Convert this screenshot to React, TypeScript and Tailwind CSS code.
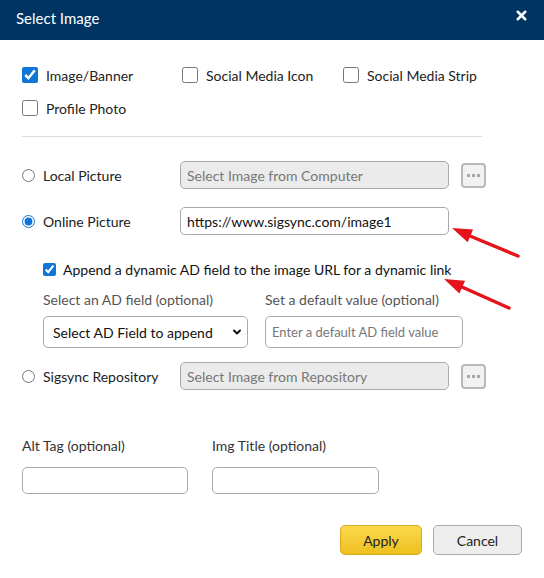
import { useState } from "react";
import { ChevronDown, X } from "lucide-react";

const IMAGE_TYPES = ["Image/Banner", "Social Media Icon", "Social Media Strip", "Profile Photo"];

const DotsButton = () => (
  <button className="ml-[12px] w-[25px] h-[25px] border-2 border-[#b9b9b9] rounded-[4px] bg-[#f1f1f1] flex items-center justify-center gap-[2px]">
    <span className="w-[3px] h-[3px] bg-[#a8a8a8]" />
    <span className="w-[3px] h-[3px] bg-[#a8a8a8]" />
    <span className="w-[3px] h-[3px] bg-[#a8a8a8]" />
  </button>
);

const SourceRow = ({
  label,
  value,
  placeholder,
  checked,
  onPick,
  withDots,
}: {
  label: string;
  value?: string;
  placeholder: string;
  checked: boolean;
  onPick: () => void;
  withDots: boolean;
}) => (
  <div className="flex items-center h-[28px]">
    <label className="w-[158px] flex items-center gap-[8px] text-[14px] text-[#222]">
      <input type="radio" checked={checked} onChange={onPick} className="m-0 w-[13px] h-[13px] accent-[#0f76d8]" />
      {label}
    </label>
    <input
      type="text"
      disabled={withDots}
      defaultValue={value}
      placeholder={placeholder}
      className={
        "w-[269px] h-[28px] px-[6px] border border-[#a9a9a9] rounded-[5px] text-[14px] outline-none placeholder:text-[#777] " +
        (withDots ? "bg-[#ebebeb]" : "bg-white text-[#111]")
      }
    />
    {withDots && <DotsButton />}
  </div>
);

export default function App() {
  const [types, setTypes] = useState<string[]>(["Image/Banner"]);
  const [source, setSource] = useState("online");
  const [appendField, setAppendField] = useState(true);

  const toggleType = (t: string) =>
    setTypes((prev) => (prev.includes(t) ? prev.filter((p) => p !== t) : [...prev, t]));

  return (
    <div className="relative w-[544px] h-[578px] bg-white font-['Lato','Liberation_Sans',sans-serif]">
      <div className="h-[40px] bg-[#003463] flex items-center justify-between pl-[16px] pr-[15px]">
        <span className="text-white text-[15px] -mt-[3px]">Select Image</span>
        <X size={15} strokeWidth={4} className="text-white -mt-[9px]" />
      </div>

      <div className="pl-[22px] pr-[22px]">
        <div className="grid grid-cols-[160px_161px_160px] gap-y-[17px] pt-[27px]">
          {IMAGE_TYPES.map((t) => (
            <label key={t} className="flex items-center gap-[8px] h-[16px] text-[14px] text-[#222]">
              <input
                type="checkbox"
                checked={types.includes(t)}
                onChange={() => toggleType(t)}
                className="m-0 w-[16px] h-[16px] accent-[#0f76d8]"
              />
              {t}
            </label>
          ))}
        </div>

        <div className="mt-[20px] h-px w-[460px] bg-[#dcdcdc]" />

        <div className="mt-[24px]">
          <SourceRow
            label="Local Picture"
            placeholder="Select Image from Computer"
            checked={source === "local"}
            onPick={() => setSource("local")}
            withDots
          />
        </div>
        <div className="mt-[18px]">
          <SourceRow
            label="Online Picture"
            value="https://www.sigsync.com/image1"
            placeholder=""
            checked={source === "online"}
            onPick={() => setSource("online")}
            withDots={false}
          />
        </div>

        <div className="pl-[21px]">
          <label className="mt-[26px] flex items-center gap-[7px] h-[16px] text-[14px] text-[#111]">
            <input
              type="checkbox"
              checked={appendField}
              onChange={() => setAppendField(!appendField)}
              className="m-0 w-[13px] h-[13px] accent-[#0f76d8]"
            />
            Append a dynamic AD field to the image URL for a dynamic link
          </label>

          <div className="mt-[14px] flex gap-[17px]">
            <div className="w-[205px]">
              <div className="text-[14px] leading-[17px] text-[#555]">Select an AD field (optional)</div>
              <div className="relative mt-[8px]">
                <select className="appearance-none w-[205px] h-[32px] pl-[9px] border border-[#a9a9a9] rounded-[5px] bg-white text-[14px] text-[#111] outline-none">
                  <option>Select AD Field to append</option>
                </select>
                <ChevronDown size={12} strokeWidth={4} className="absolute right-[5px] top-[10px] text-[#111] pointer-events-none" />
              </div>
            </div>
            <div className="w-[198px]">
              <div className="text-[14px] leading-[17px] text-[#555]">Set a default value (optional)</div>
              <input
                type="text"
                placeholder="Enter a default AD field value"
                className="mt-[8px] w-[198px] h-[32px] px-[6px] border border-[#a9a9a9] rounded-[5px] text-[13px] outline-none placeholder:text-[#777]"
              />
            </div>
          </div>
        </div>

        <div className="mt-[14px]">
          <SourceRow
            label="Sigsync Repository"
            placeholder="Select Image from Repository"
            checked={source === "repo"}
            onPick={() => setSource("repo")}
            withDots
          />
        </div>

        <div className="mt-[47px] flex gap-[24px]">
          <div className="w-[166px]">
            <div className="text-[14px] leading-[17px] text-[#333]">Alt Tag (optional)</div>
            <input type="text" className="mt-[13px] w-[166px] h-[27px] px-[6px] border border-[#a9a9a9] rounded-[5px] outline-none" />
          </div>
          <div className="w-[167px]">
            <div className="text-[14px] leading-[17px] text-[#333]">Img Title (optional)</div>
            <input type="text" className="mt-[13px] w-[167px] h-[27px] px-[6px] border border-[#a9a9a9] rounded-[5px] outline-none" />
          </div>
        </div>

        <div className="mt-[31px] flex justify-end gap-[11px]">
          <button className="w-[82px] h-[30px] rounded-[5px] border border-[#d6ab22] bg-gradient-to-b from-[#fbd84c] to-[#eec01a] text-[14px] text-[#222]">
            Apply
          </button>
          <button className="w-[89px] h-[30px] rounded-[5px] border border-[#a9a9a9] bg-[#eeeeee] text-[14px] text-[#222]">
            Cancel
          </button>
        </div>
      </div>

      {/* callout arrows */}
      <svg className="absolute inset-0 pointer-events-none" width="544" height="578">
        <line x1="518" y1="256" x2="470" y2="236" stroke="#e5141b" strokeWidth="3.5" strokeLinecap="round" />
        <polygon points="452,228 473.1,229.4 467.7,242.2" fill="#e5141b" />
        <line x1="509" y1="308" x2="462" y2="287" stroke="#e5141b" strokeWidth="3.5" strokeLinecap="round" />
        <polygon points="444,279 465.1,280.7 459.4,293.5" fill="#e5141b" />
      </svg>
    </div>
  );
}
